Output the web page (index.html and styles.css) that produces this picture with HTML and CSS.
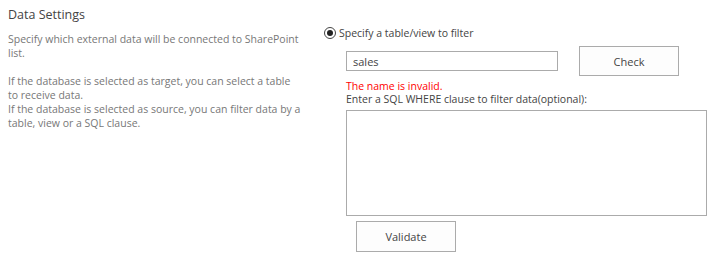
FILE: index.html
```html
<!DOCTYPE html>
<html lang="en">
<head>
    <meta charset="UTF-8">
    <title>Data Settings</title>
    <link rel="stylesheet" href="styles.css">
</head>
<body>

    <div class="section">
        <!-- Левая колонка: описание -->
        <div class="section-info">
            <h3 class="section-title">Data Settings</h3>
            <p class="section-desc">Specify which external data will be connected to SharePoint list.</p>
            <p class="section-desc gap">If the database is selected as target, you can select a table<br>to receive data.<br>If the database is selected as source, you can filter data by a table, view or a SQL clause.</p>
        </div>

        <!-- Правая колонка: поля -->
        <div class="section-body">
            <label class="radio-row">
                <span class="radio"><span class="radio-dot"></span></span>
                Specify a table/view to filter
            </label>

            <div class="fields">
                <div class="name-row">
                    <input type="text" class="text-input" value="sales">
                    <button type="button" class="btn btn-check">Check</button>
                </div>
                <div class="error">The name is invalid.</div>
                <div class="field-label">Enter a SQL WHERE clause to filter data(optional):</div>
                <textarea class="sql-box"></textarea>
                <button type="button" class="btn btn-validate">Validate</button>
            </div>
        </div>
    </div>

</body>
</html>
```

FILE: styles.css
```css
/* Основные стили */
body {
    margin: 0;
    background: #fff;
    font-family: "Open Sans", "Liberation Sans", sans-serif;
    color: #444;
}

.section {
    display: flex;
    padding: 6px 0 0 8px;
}

.section-info {
    width: 300px;
}

.section-title {
    margin: 0;
    font-size: 12.5px;
    font-weight: normal;
    color: #444;
    line-height: 17px;
}

.section-desc {
    margin: 9px 0 0;
    font-size: 10.5px;
    line-height: 14px;
    color: #777;
}

.section-desc.gap {
    margin-top: 14px;
}

.section-body {
    padding-left: 16px;
    padding-top: 20px;
}

.radio-row {
    display: flex;
    align-items: center;
    gap: 3px;
    font-size: 10.5px;
    line-height: 14px;
    color: #444;
}

.radio {
    width: 10px;
    height: 10px;
    border: 1px solid #444;
    border-radius: 50%;
    display: flex;
    align-items: center;
    justify-content: center;
}

.radio-dot {
    width: 6px;
    height: 6px;
    border-radius: 50%;
    background: #222;
}

.fields {
    padding-left: 22px;
    display: flex;
    flex-direction: column;
    align-items: flex-start;
}

.name-row {
    display: flex;
    align-items: center;
    gap: 21px;
    margin-top: 6px;
}

.text-input {
    width: 212px;
    height: 20px;
    box-sizing: border-box;
    border: 1px solid #ababab;
    padding: 0 6px;
    font-family: inherit;
    font-size: 11px;
    color: #444;
}

.btn {
    width: 100px;
    height: 30px;
    box-sizing: border-box;
    border: 1px solid #ababab;
    background: #fdfdfd;
    font-family: inherit;
    font-size: 11px;
    color: #444;
    padding: 0;
}

.error {
    margin-top: 4px;
    font-size: 10.5px;
    line-height: 13px;
    color: #f00;
}

.field-label {
    font-size: 10.5px;
    line-height: 13px;
    color: #444;
}

.sql-box {
    margin-top: 4px;
    width: 361px;
    height: 106px;
    box-sizing: border-box;
    border: 1px solid #ababab;
    resize: none;
}

.btn-validate {
    margin: 5px 0 0 10px;
    height: 31px;
}
```
